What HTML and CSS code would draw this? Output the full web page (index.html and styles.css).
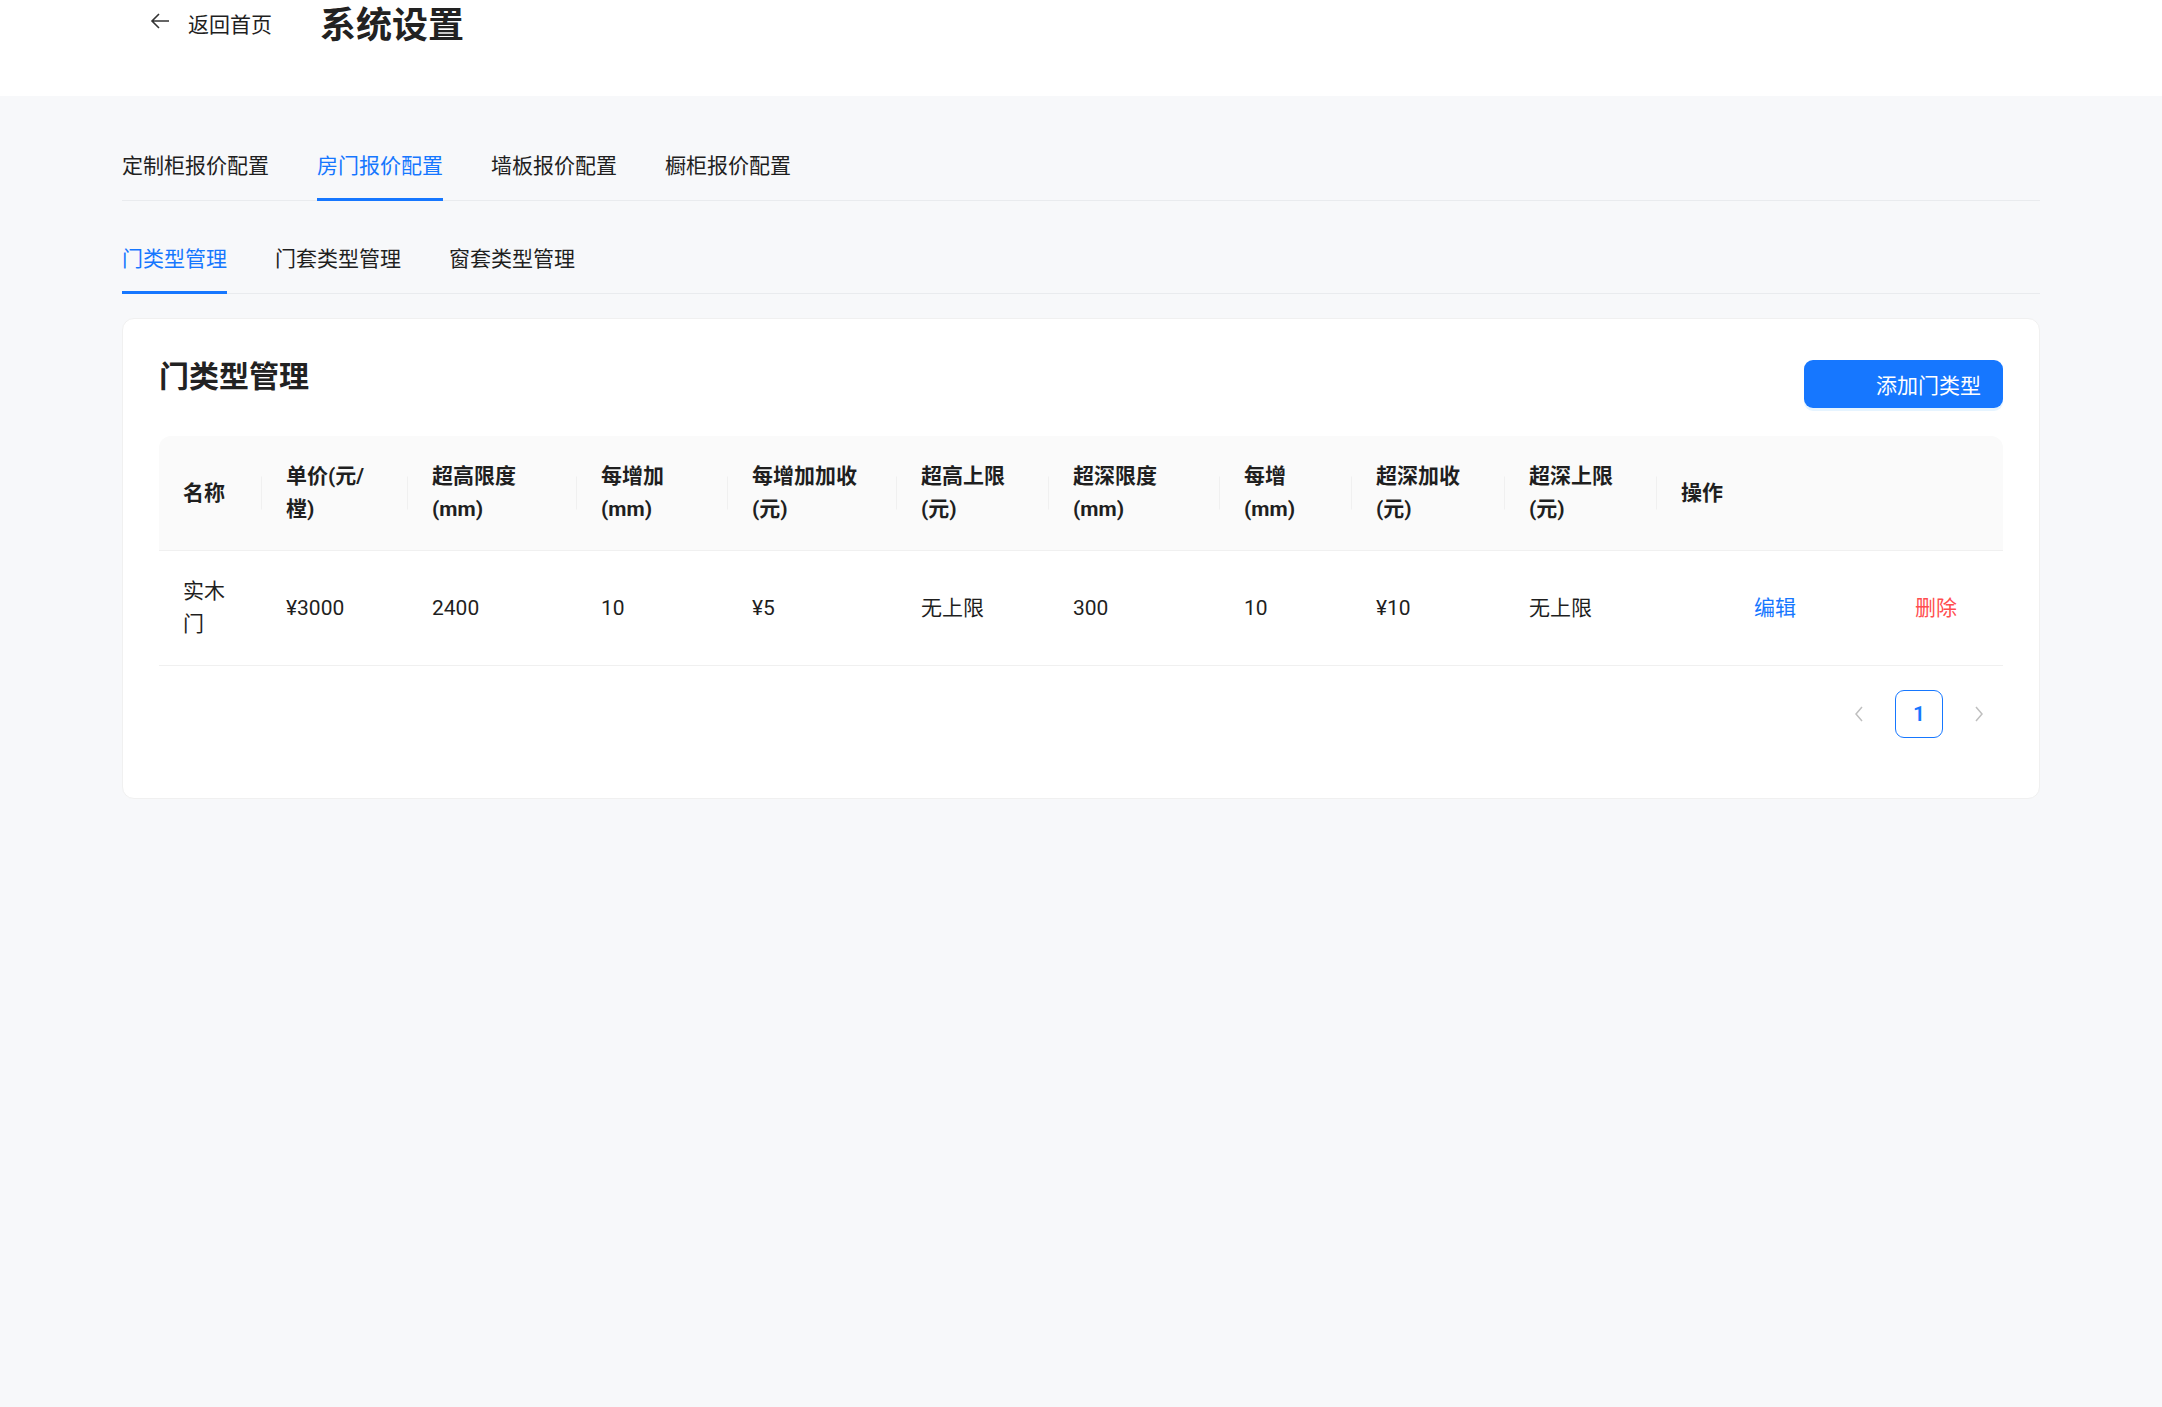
FILE: index.html
```html
<!DOCTYPE html>
<html lang="zh-CN">
<head>
  <meta charset="UTF-8">
  <meta name="viewport" content="width=device-width, initial-scale=1.0">
  <title>系统设置</title>

  <link rel="stylesheet" href="styles.css">
</head>

<body>
  <header class="topbar">
    <a class="back-link" href="#">
      <svg class="back-icon" width="20" height="18" viewBox="0 0 20 18">
        <path d="M19 9H2M9 2L2 9l7 7" fill="none" stroke="#333" stroke-width="1.6"/>
      </svg>
      返回首页
    </a>
    <h1 class="page-title">系统设置</h1>
  </header>

  <main class="content">
    <nav class="tabs">
      <a class="tab">定制柜报价配置</a>
      <a class="tab active">房门报价配置</a>
      <a class="tab">墙板报价配置</a>
      <a class="tab">橱柜报价配置</a>
    </nav>

    <nav class="tabs">
      <a class="tab active">门类型管理</a>
      <a class="tab">门套类型管理</a>
      <a class="tab">窗套类型管理</a>
    </nav>

    <section class="card">
      <div class="card-head">
        <h2 class="card-title">门类型管理</h2>
        <button class="btn-primary">添加门类型</button>
      </div>

      <table class="data-table">
        <colgroup>
          <col style="width: 103px">
          <col style="width: 146px">
          <col style="width: 169px">
          <col style="width: 151px">
          <col style="width: 169px">
          <col style="width: 152px">
          <col style="width: 171px">
          <col style="width: 132px">
          <col style="width: 153px">
          <col style="width: 152px">
          <col>
        </colgroup>
        <thead>
          <tr>
            <th>名称</th>
            <th>单价(元/<br>樘)</th>
            <th>超高限度<br>(mm)</th>
            <th>每增加<br>(mm)</th>
            <th>每增加加收<br>(元)</th>
            <th>超高上限<br>(元)</th>
            <th>超深限度<br>(mm)</th>
            <th>每增<br>(mm)</th>
            <th>超深加收<br>(元)</th>
            <th>超深上限<br>(元)</th>
            <th>操作</th>
          </tr>
        </thead>
        <tbody>
          <tr>
            <td>实木<br>门</td>
            <td>¥3000</td>
            <td>2400</td>
            <td>10</td>
            <td>¥5</td>
            <td>无上限</td>
            <td>300</td>
            <td>10</td>
            <td>¥10</td>
            <td>无上限</td>
            <td>
              <div class="row-actions">
                <a class="link-btn">编辑</a>
                <a class="link-btn danger">删除</a>
              </div>
            </td>
          </tr>
        </tbody>
      </table>

      <div class="pager">
        <span class="pager-item disabled">
          <svg width="10" height="16" viewBox="0 0 10 16"><path d="M8 1L2 8l6 7" fill="none" stroke="currentColor" stroke-width="1.5"/></svg>
        </span>
        <span class="pager-item current">1</span>
        <span class="pager-item disabled">
          <svg width="10" height="16" viewBox="0 0 10 16"><path d="M2 1l6 7-6 7" fill="none" stroke="currentColor" stroke-width="1.5"/></svg>
        </span>
      </div>
    </section>
  </main>
</body>
</html>
```

FILE: styles.css
```css
/* Resets */
* {
  box-sizing: border-box;
  margin: 0;
  padding: 0;
}

body {
  min-height: 100vh;
  background: #f7f8fa;
  color: #1f1f1f;
  font-family: Roboto, "Noto Sans CJK SC", sans-serif;
  font-size: 21px;
  line-height: 33px;
}

a {
  color: inherit;
  text-decoration: none;
  cursor: pointer;
}

/* Top bar */
.topbar {
  height: 96px;
  background: #fff;
  display: flex;
  align-items: flex-start;
  gap: 48px;
  padding-left: 150px;
}

.back-link {
  display: flex;
  align-items: center;
  gap: 18px;
  height: 50px;
  font-size: 21px;
}

.back-icon {
  margin-bottom: 8px;
}

.page-title {
  font-size: 36px;
  line-height: 52px;
  font-weight: 700;
  color: #222;
}

/* Page content */
.content {
  padding: 36px 122px 0;
}

/* Tabs */
.tabs {
  display: flex;
  gap: 48px;
  border-bottom: 1px solid #e9ebee;
  margin-bottom: 24px;
}

.tab {
  position: relative;
  padding: 18px 0 17px;
  line-height: 33px;
}

.tab.active {
  color: #1677ff;

  &::after {
    content: "";
    position: absolute;
    left: 0;
    right: 0;
    bottom: -1px;
    height: 3px;
    background: #1677ff;
  }
}

/* Card */
.card {
  background: #fff;
  border: 1px solid #f0f0f0;
  border-radius: 12px;
  padding: 36px;
}

.card-head {
  display: flex;
  justify-content: space-between;
  align-items: flex-start;
  margin-bottom: 28px;
}

.card-title {
  font-size: 30px;
  line-height: 44px;
  font-weight: 700;
  color: #222;
}

.btn-primary {
  margin-top: 5px;
  height: 48px;
  padding: 0 22px 0 72px;
  border: 0;
  border-radius: 9px;
  background: #1677ff;
  color: #fff;
  font-family: inherit;
  font-size: 21px;
  box-shadow: 0 3px 0 rgba(5, 145, 255, 0.1);
  cursor: pointer;
}

/* Table */
.data-table {
  width: 100%;
  table-layout: fixed;
  border-collapse: separate;
  border-spacing: 0;

  & th,
  & td {
    padding: 24px;
    text-align: left;
    vertical-align: middle;
    border-bottom: 1px solid #f0f0f0;
  }

  & th {
    position: relative;
    background: #fafafa;
    font-weight: 700;
    color: #1f1f1f;
  }

  & th:first-child {
    border-top-left-radius: 12px;
  }

  & th:last-child {
    border-top-right-radius: 12px;
  }

  /* column separators in the header */
  & th:not(:last-child)::after {
    content: "";
    position: absolute;
    right: 0;
    top: 50%;
    width: 1px;
    height: 33px;
    transform: translateY(-50%);
    background: #f0f0f0;
  }
}

.row-actions {
  display: flex;
  justify-content: flex-end;
  gap: 75px;
}

.link-btn {
  padding: 0 22px;
  color: #1677ff;
}

.link-btn.danger {
  color: #ff4d4f;
}

/* Pagination */
.pager {
  display: flex;
  justify-content: flex-end;
  gap: 12px;
  margin: 24px 0;
}

.pager-item {
  width: 48px;
  height: 48px;
  display: flex;
  align-items: center;
  justify-content: center;
  border-radius: 9px;
  font-size: 21px;
}

.pager-item.disabled {
  color: #bfbfbf;
}

.pager-item.current {
  border: 1px solid #1677ff;
  color: #1677ff;
  font-weight: 600;
}
```
